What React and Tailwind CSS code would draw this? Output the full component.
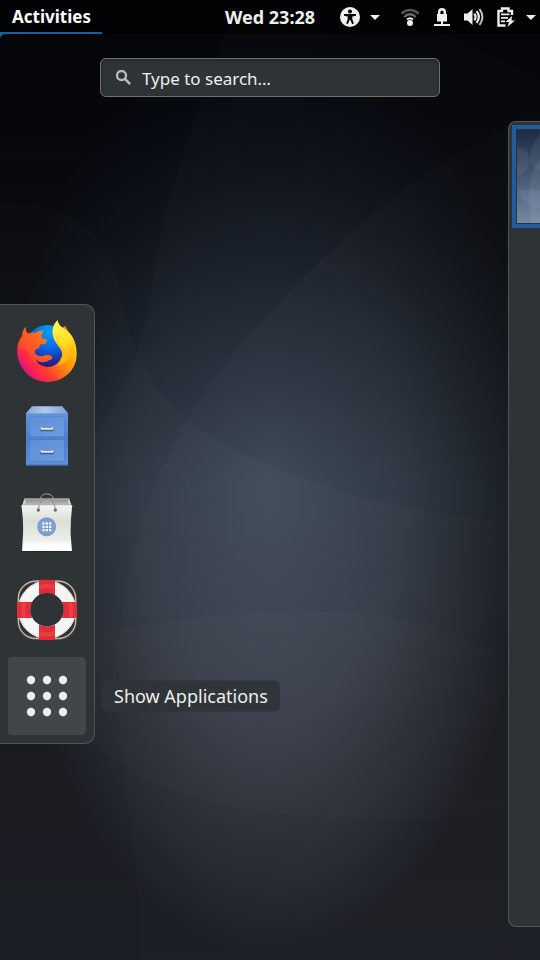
import React from "react";

function Wallpaper() {
  return (
    <svg
      className="absolute inset-0 h-full w-full"
      viewBox="0 0 540 960"
      preserveAspectRatio="none"
      aria-hidden="true"
    >
      <defs>
        <linearGradient id="sky" x1="0" y1="0" x2="0" y2="1">
          <stop offset="0" stopColor="#0c1424" />
          <stop offset=".12" stopColor="#141d31" />
          <stop offset=".25" stopColor="#263144" />
          <stop offset=".5" stopColor="#4e5f76" />
          <stop offset=".75" stopColor="#5c6780" />
          <stop offset="1" stopColor="#68758f" />
        </linearGradient>
        <radialGradient id="vignette" cx=".5" cy=".5" r=".49">
          <stop offset="0" stopColor="#000000" stopOpacity=".3" />
          <stop offset=".5" stopColor="#000000" stopOpacity=".46" />
          <stop offset=".8" stopColor="#000000" stopOpacity=".64" />
          <stop offset="1" stopColor="#000000" stopOpacity=".76" />
        </radialGradient>
      </defs>
      <rect width="540" height="960" fill="url(#sky)" />
      <g fill="#ffffff" fillOpacity=".04">
        <path d="M236 0C205 95 170 180 158 250S145 360 95 435L0 520V960H540V80C430 20 360 10 300 0Z" />
        <path d="M0 204C70 200 110 230 122 300C140 400 190 430 275 468C360 500 430 518 540 522V960H0Z" />
        <path d="M540 110C430 160 330 240 240 345C160 440 115 560 118 690C120 790 140 850 141 960H540Z" />
        <path d="M0 655C120 625 230 611 310 611C410 612 480 640 540 680V810C400 828 260 822 172 790C130 775 80 730 0 690Z" />
      </g>
      <path
        d="M220 960C270 850 380 750 540 650V960Z"
        fill="#ffffff"
        fillOpacity=".025"
      />
      <rect width="540" height="960" fill="url(#vignette)" />
    </svg>
  );
}

function AccessibilityIcon() {
  return (
    <svg className="h-5 w-5" viewBox="0 0 20 20" aria-hidden="true">
      <circle cx="10" cy="10" r="10" fill="#eeeeec" />
      <circle cx="10" cy="4.6" r="2" fill="#050609" />
      <path
        d="M4 7H16V8.8L12.3 9.6V12L13.8 16.6L12.2 17.2L10.4 13H9.6L7.8 17.2L6.2 16.6L7.7 12V9.6L4 8.8Z"
        fill="#050609"
      />
    </svg>
  );
}

function Caret() {
  return (
    <svg className="h-[5px] w-[10px]" viewBox="0 0 10 5" aria-hidden="true">
      <path d="M0 0H10L5 5Z" fill="#eeeeec" />
    </svg>
  );
}

function WifiIcon() {
  return (
    <svg className="h-5 w-5" viewBox="0 0 20 20" fill="none" aria-hidden="true">
      <path d="M1.6 6.6C6.5 1.8 13.5 1.8 18.4 6.600" stroke="#555658" strokeWidth="2.6" />
      <path d="M4.300 10C7.800 6.400 12.200 6.400 15.700 10" stroke="#6a6b6d" strokeWidth="2.4" />
      <path d="M7 12.600C8.800 11 11.200 11 13 12.600" stroke="#eeeeec" strokeWidth="2" />
      <circle cx="10" cy="16" r="3" fill="#eeeeec" />
    </svg>
  );
}

function NetworkLockIcon() {
  return (
    <svg className="h-5 w-5" viewBox="0 0 20 20" aria-hidden="true">
      <path d="M7.200 8V5a2.800 2.800 0 0 1 5.600 0V8" fill="none" stroke="#eeeeec" strokeWidth="2.400" />
      <path d="M5 7H15V14.5H11V17H18V19H2V17H9V14.5H5Z" fill="#eeeeec" />
    </svg>
  );
}

function VolumeIcon() {
  return (
    <svg className="h-5 w-5" viewBox="0 0 20 20" fill="none" aria-hidden="true">
      <path d="M0 6.500H3.500L8.500 2V18L3.500 13.500H0Z" fill="#eeeeec" />
      <path d="M10.300 6.800Q12.900 10 10.300 13.200" stroke="#eeeeec" strokeWidth="2.200" />
      <path d="M12.700 4.200Q17 10 12.700 15.800" stroke="#eeeeec" strokeWidth="2.200" />
      <path d="M15.500 2Q21.300 10 15.500 18" stroke="#c4c5c5" strokeWidth="2" />
    </svg>
  );
}

function BatteryIcon() {
  return (
    <svg className="h-5 w-5" viewBox="0 0 20 20" aria-hidden="true">
      <path
        d="M9.500 18.500H2.500V4H6V1.500H12.500V4H16V8"
        fill="none"
        stroke="#eeeeec"
        strokeWidth="2.400"
      />
      <path d="M5 6.500H13.500V8.300H5ZM5 10H12V11.800H5ZM5 13.500H9V15.300H5Z" fill="#eeeeec" />
      <path d="M16 9L9.500 15H13L11.500 20L19 13.500H15.500Z" fill="#eeeeec" />
    </svg>
  );
}

function SearchIcon() {
  return (
    <svg className="h-4 w-4 shrink-0" viewBox="0 0 16 16" fill="none" aria-hidden="true">
      <circle cx="6.500" cy="5.500" r="4.500" stroke="#babcbc" strokeWidth="2.300" />
      <path d="M9.500 8.500L15.200 14.200" stroke="#babcbc" strokeWidth="2.600" />
    </svg>
  );
}

function FirefoxIcon() {
  return (
    <svg className="h-16 w-16" viewBox="45 60 192 192" aria-hidden="true">
      <defs>
        <radialGradient id="ffGlobe" cx=".55" cy=".15" r=".9">
          <stop offset="0" stopColor="#00a2ff" />
          <stop offset=".45" stopColor="#0a68e4" />
          <stop offset=".8" stopColor="#1a2c9c" />
          <stop offset="1" stopColor="#2a0e66" />
        </radialGradient>
        <linearGradient id="ffBody" x1=".95" y1=".15" x2=".08" y2=".8">
          <stop offset="0" stopColor="#ffe226" />
          <stop offset=".25" stopColor="#ffb000" />
          <stop offset=".48" stopColor="#ff7a14" />
          <stop offset=".7" stopColor="#ff3c30" />
          <stop offset=".87" stopColor="#fa1f55" />
          <stop offset="1" stopColor="#c1129b" />
        </linearGradient>
        <linearGradient id="ffFace" x1="0" y1="1" x2="1" y2="0">
          <stop offset="0" stopColor="#ff3341" />
          <stop offset=".55" stopColor="#ff601f" />
          <stop offset="1" stopColor="#ff9a12" />
        </linearGradient>
        <linearGradient id="ffTail" x1=".3" y1="0" x2=".65" y2="1">
          <stop offset="0" stopColor="#fff44f" />
          <stop offset=".5" stopColor="#ffdf28" />
          <stop offset="1" stopColor="#ff9f08" />
        </linearGradient>
      </defs>
      <circle cx="142" cy="138" r="63" fill="url(#ffGlobe)" />
      <path d="M186 84L196 78Q204 90 206 104Z" fill="#ff8a16" />
      <path
        d="M76 81C69 91 67 99 67 107C51 125 48 151 56 181C68 220 102 246 142 246C184 245 215 222 227 186C235 158 228 117 206 96C195 88 197 94 199 103C204 125 196 151 185 169C177 191 162 200 144 201C124 199 110 190 106 177C118 188 132 190 146 181C151 178 157 178 157 174C156 167 146 163 136 166C124 171 110 169 105 160C101 149 109 145 117 144L120 133L136 132L141 120L127 116L123 106L130 92C119 92 110 96 105 100C98 97 89 99 83 101C79 97 76 90 76 81Z"
        fill="url(#ffBody)"
      />
      <path
        d="M76 81C69 91 67 99 67 107C58 119 53 134 55 151C67 136 87 154 92 172C97 187 109 190 115 188C108 184 105 177 106 175C118 188 132 190 146 181C151 178 157 178 157 174C156 167 146 163 136 166C124 171 110 169 105 160C101 149 109 145 117 144L120 133L136 132L141 120L127 116L123 106L130 92C119 92 110 96 105 100C98 97 89 99 83 101C79 97 76 90 76 81Z"
        fill="url(#ffFace)"
      />
      <path
        d="M173 60C161 71 156 85 158 102C160 121 174 135 182 148C191 163 186 181 174 198C201 189 220 170 222 147C225 116 211 96 190 84C180 78 174 71 173 60Z"
        fill="url(#ffTail)"
      />
      <path d="M182 148C191 163 188 181 174 198C200 187 206 160 192 145C178 130 169 115 169 98C164 120 176 137 182 148Z" fill="#ffb415" opacity=".5" />
    </svg>
  );
}

function FilesIcon() {
  return (
    <svg className="h-16 w-16" viewBox="45 318 192 192" aria-hidden="true">
      <defs>
        <linearGradient id="cabTop" x1="0" x2="1">
          <stop offset="0" stopColor="#82a8dc" />
          <stop offset=".45" stopColor="#b3c9e6" />
          <stop offset="1" stopColor="#78a0d6" />
        </linearGradient>
        <linearGradient id="cabBody" x1="0" x2="0" y1="0" y2="1">
          <stop offset="0" stopColor="#6393da" />
          <stop offset=".5" stopColor="#4c80ce" />
          <stop offset="1" stopColor="#5f90d8" />
        </linearGradient>
        <linearGradient id="drawer" x1="0" x2="1" y1="0" y2="1">
          <stop offset="0" stopColor="#5f8ed6" />
          <stop offset="1" stopColor="#6d9be0" />
        </linearGradient>
      </defs>
      <path d="M96 319H187L204 340V343H78V340Z" fill="url(#cabTop)" />
      <rect x="78" y="340" width="126" height="156" fill="url(#cabBody)" />
      <path d="M78 495H204" stroke="#3d6db8" strokeWidth="3" />
      {[350, 419].map((y) => (
        <g key={y}>
          <rect x="89" y={y} width="104" height={y === 350 ? 61 : 66} fill="#4b7cc8" />
          <rect x="90" y={y + 1} width="102" height={y === 350 ? 58 : 63} fill="url(#drawer)" />
          <path d={`M123 ${y + 33}V${y + 41}H159V${y + 33}`} fill="none" stroke="#46608a" strokeWidth="5" />
          <path d={`M124 ${y + 31}V${y + 37}H158V${y + 31}`} fill="none" stroke="#c8cbcf" strokeWidth="5" />
          <path d={`M124 ${y + 36}H158`} stroke="#f1f1ef" strokeWidth="3" />
        </g>
      ))}
    </svg>
  );
}

function SoftwareIcon() {
  return (
    <svg className="h-16 w-16" viewBox="45 36 192 192" aria-hidden="true">
      <defs>
        <linearGradient id="bag" x1="0" y1="0" x2="0" y2="1">
          <stop offset="0" stopColor="#f3f4f0" />
          <stop offset=".35" stopColor="#dcdfd6" />
          <stop offset=".75" stopColor="#eceee9" />
          <stop offset=".85" stopColor="#fbfbfa" />
          <stop offset="1" stopColor="#ffffff" />
        </linearGradient>
        <linearGradient id="bagBack" x1="0" y1="0" x2="0" y2="1">
          <stop offset="0" stopColor="#8e8f8c" />
          <stop offset="1" stopColor="#bcbdba" />
        </linearGradient>
      </defs>
      <ellipse cx="141" cy="211" rx="81" ry="5" fill="#171b1c" opacity=".65" />
      <path d="M73 55H208L213 78H67Z" fill="url(#bagBack)" />
      <path d="M74 56H207V58H74Z" fill="#c6c7c4" />
      <path d="M78 69H203V76H70Z" fill="#b4b5b3" />
      <path d="M74 56L78 68L66 77ZM207 56L203 68L215 77Z" fill="#d5d6d3" />
      <path d="M121 56C123 37 158 37 160 56" fill="none" stroke="#a0a39d" strokeWidth="3" />
      <path d="M64 76H217Q211 120 212 164L216 213H66L69 164Q71 120 64 76Z" fill="url(#bag)" />
      <circle cx="115" cy="90" r="5" fill="#666962" />
      <circle cx="166" cy="90" r="5" fill="#666962" />
      <path d="M115 90C114 51 167 51 166 90" fill="none" stroke="#777a73" strokeWidth="4" />
      <path d="M116 86C118 54 163 54 165 86" fill="none" stroke="#e8e9e5" strokeWidth="2" />
      <circle cx="140" cy="140" r="28.500" fill="#7da0cf" />
      {[127, 137, 147].map((x) =>
        [127, 137, 147].map((y) => (
          <rect key={`${x}-${y}`} x={x} y={y} width="7" height="7" rx="1" fill="#f4f5f6" />
        ))
      )}
    </svg>
  );
}

function HelpIcon() {
  return (
    <svg className="h-16 w-16" viewBox="45 294 192 192" fill="none" aria-hidden="true">
      <rect x="55" y="304" width="172" height="172" rx="52" stroke="#8c7868" strokeWidth="5" />
      <rect x="55" y="303" width="172" height="172" rx="52" stroke="#d9c4b0" strokeWidth="3" />
      <circle cx="141" cy="389" r="68" stroke="#f5f5f3" strokeWidth="38" />
      <circle cx="141" cy="389" r="85" stroke="#dededb" strokeWidth="3" />
      <path
        d="M117 300Q141 299 165 300V345Q141 335 117 345ZM117 479Q141 481 165 479V434Q141 444 117 434ZM52 366Q50 390 52 414H97Q86 390 97 366ZM230 366Q232 390 230 414H185Q196 390 185 366Z"
        fill="#e22d36"
      />
      <path d="M118 322Q141 314 164 322M118 460Q141 467 164 460M73 367Q66 390 73 413M210 367Q217 390 210 413" stroke="#ec4b53" strokeWidth="12" opacity=".6" />
      <circle cx="141" cy="389" r="50" fill="#2e3436" />
    </svg>
  );
}

function AppGridIcon() {
  return (
    <svg className="h-16 w-16" viewBox="45 552 192 192" aria-hidden="true">
      {[93, 141, 189].map((x) =>
        [600, 648, 696].map((y) => (
          <circle key={`${x}-${y}`} cx={x} cy={y} r="12.500" fill="#eeeeec" />
        ))
      )}
    </svg>
  );
}

const apps = [
  { name: "Firefox", Icon: FirefoxIcon },
  { name: "Files", Icon: FilesIcon },
  { name: "Software", Icon: SoftwareIcon },
  { name: "Help", Icon: HelpIcon },
];

function TopBar() {
  return (
    <header className="grid h-[34px] grid-cols-[1fr_auto_1fr] items-stretch bg-black/60 font-bold text-[#eeeeec]">
      <div className="relative flex">
        <button
          type="button"
          className="w-[102px] border-b-2 border-[#215d9c] pl-3 pt-0.5 text-left text-[17px] text-white"
        >
          Activities
        </button>
        <svg className="absolute left-0 top-full h-1.5 w-1.5" viewBox="0 0 6 6" aria-hidden="true">
          <path d="M0 0H6Q0 0 0 6Z" fill="#215d9c" />
        </svg>
      </div>
      <button type="button" className="text-[18px]">Wed 23:28</button>
      <div className="flex justify-end">
        <button type="button" aria-label="Accessibility" className="flex items-center gap-2.5">
          <AccessibilityIcon />
          <Caret />
        </button>
        <button
          type="button"
          aria-label="System"
          className="ml-5 flex items-center gap-3 pr-1"
        >
          <WifiIcon />
          <NetworkLockIcon />
          <VolumeIcon />
          <span className="flex items-center gap-2.5">
            <BatteryIcon />
            <Caret />
          </span>
        </button>
      </div>
    </header>
  );
}

function Dash() {
  return (
    <nav
      aria-label="Favorites"
      className="flex flex-col gap-2 rounded-r-[10px] border border-l-0 border-[#50565a] bg-[#2e3436] p-2"
    >
      {apps.map(({ name, Icon }) => (
        <button
          key={name}
          type="button"
          aria-label={name}
          className="flex h-[78px] w-[78px] items-center justify-center rounded"
        >
          <Icon />
        </button>
      ))}
      <div className="relative">
        <button
          type="button"
          aria-describedby="apps-tip"
          aria-label="Show Applications"
          className="flex h-[78px] w-[78px] items-center justify-center rounded bg-[#414648]"
        >
          <AppGridIcon />
        </button>
        <span
          id="apps-tip"
          role="tooltip"
          className="absolute left-full top-1/2 ml-4 flex h-[31px] -translate-y-1/2 items-center whitespace-nowrap rounded-md bg-[#2e3436]/90 px-3 text-[18px] text-[#eeeeec]"
        >
          Show Applications
        </span>
      </div>
    </nav>
  );
}

function Workspaces() {
  return (
    <aside
      aria-label="Workspaces"
      className="w-8 self-stretch overflow-hidden rounded-l-lg border border-r-0 border-[#50565a] bg-[#2e3436] pl-[3px] pt-[3px]"
    >
      <button
        type="button"
        aria-label="Workspace 1"
        className="block h-[103px] w-full border-4 border-r-0 border-[#215d9c]"
      >
        <svg className="h-full w-full" viewBox="0 0 24 95" preserveAspectRatio="none" aria-hidden="true">
          <defs>
            <linearGradient id="thumb" x1="0" x2="0" y1="0" y2="1">
              <stop offset="0" stopColor="#1e2a44" />
              <stop offset=".5" stopColor="#465873" />
              <stop offset="1" stopColor="#7389a5" />
            </linearGradient>
          </defs>
          <rect width="24" height="95" fill="#2e3436" />
          <rect x="1" y="1" width="23" height="93" fill="url(#thumb)" />
          <g fill="#ffffff" fillOpacity=".06">
            <path d="M1 18Q12 18 14 31Q12 45 1 47Z" />
            <path d="M24 3Q14 18 14 31Q16 39 24 42Z" />
            <path d="M24 30Q13 44 13 65Q13 82 16 94H24Z" />
            <path d="M1 61Q12 59 24 62V79Q8 76 1 61Z" />
          </g>
        </svg>
      </button>
    </aside>
  );
}

export default function App() {
  return (
    <div className="relative min-h-screen w-full overflow-hidden bg-black font-['Noto_Sans',sans-serif]">
      <Wallpaper />
      <div className="relative flex min-h-screen flex-col">
        <TopBar />
        <label className="mx-auto mt-6 flex h-[39px] w-[63%] items-center gap-[11px] rounded-md border border-[#6f735f] bg-[#2e3436] px-3.5 shadow-[inset_0_2px_4px_rgba(0,0,0,0.25)]">
          <SearchIcon />
          <input
            type="text"
            aria-label="Search"
            placeholder="Type to search…"
            className="min-w-0 flex-1 bg-transparent pt-0.5 text-[17px] text-[#eeeeec] outline-none placeholder:text-[#eeeeec]"
          />
        </label>
        <main className="flex flex-1 items-center justify-between pb-[33px] pt-6">
          <Dash />
          <Workspaces />
        </main>
      </div>
    </div>
  );
}
